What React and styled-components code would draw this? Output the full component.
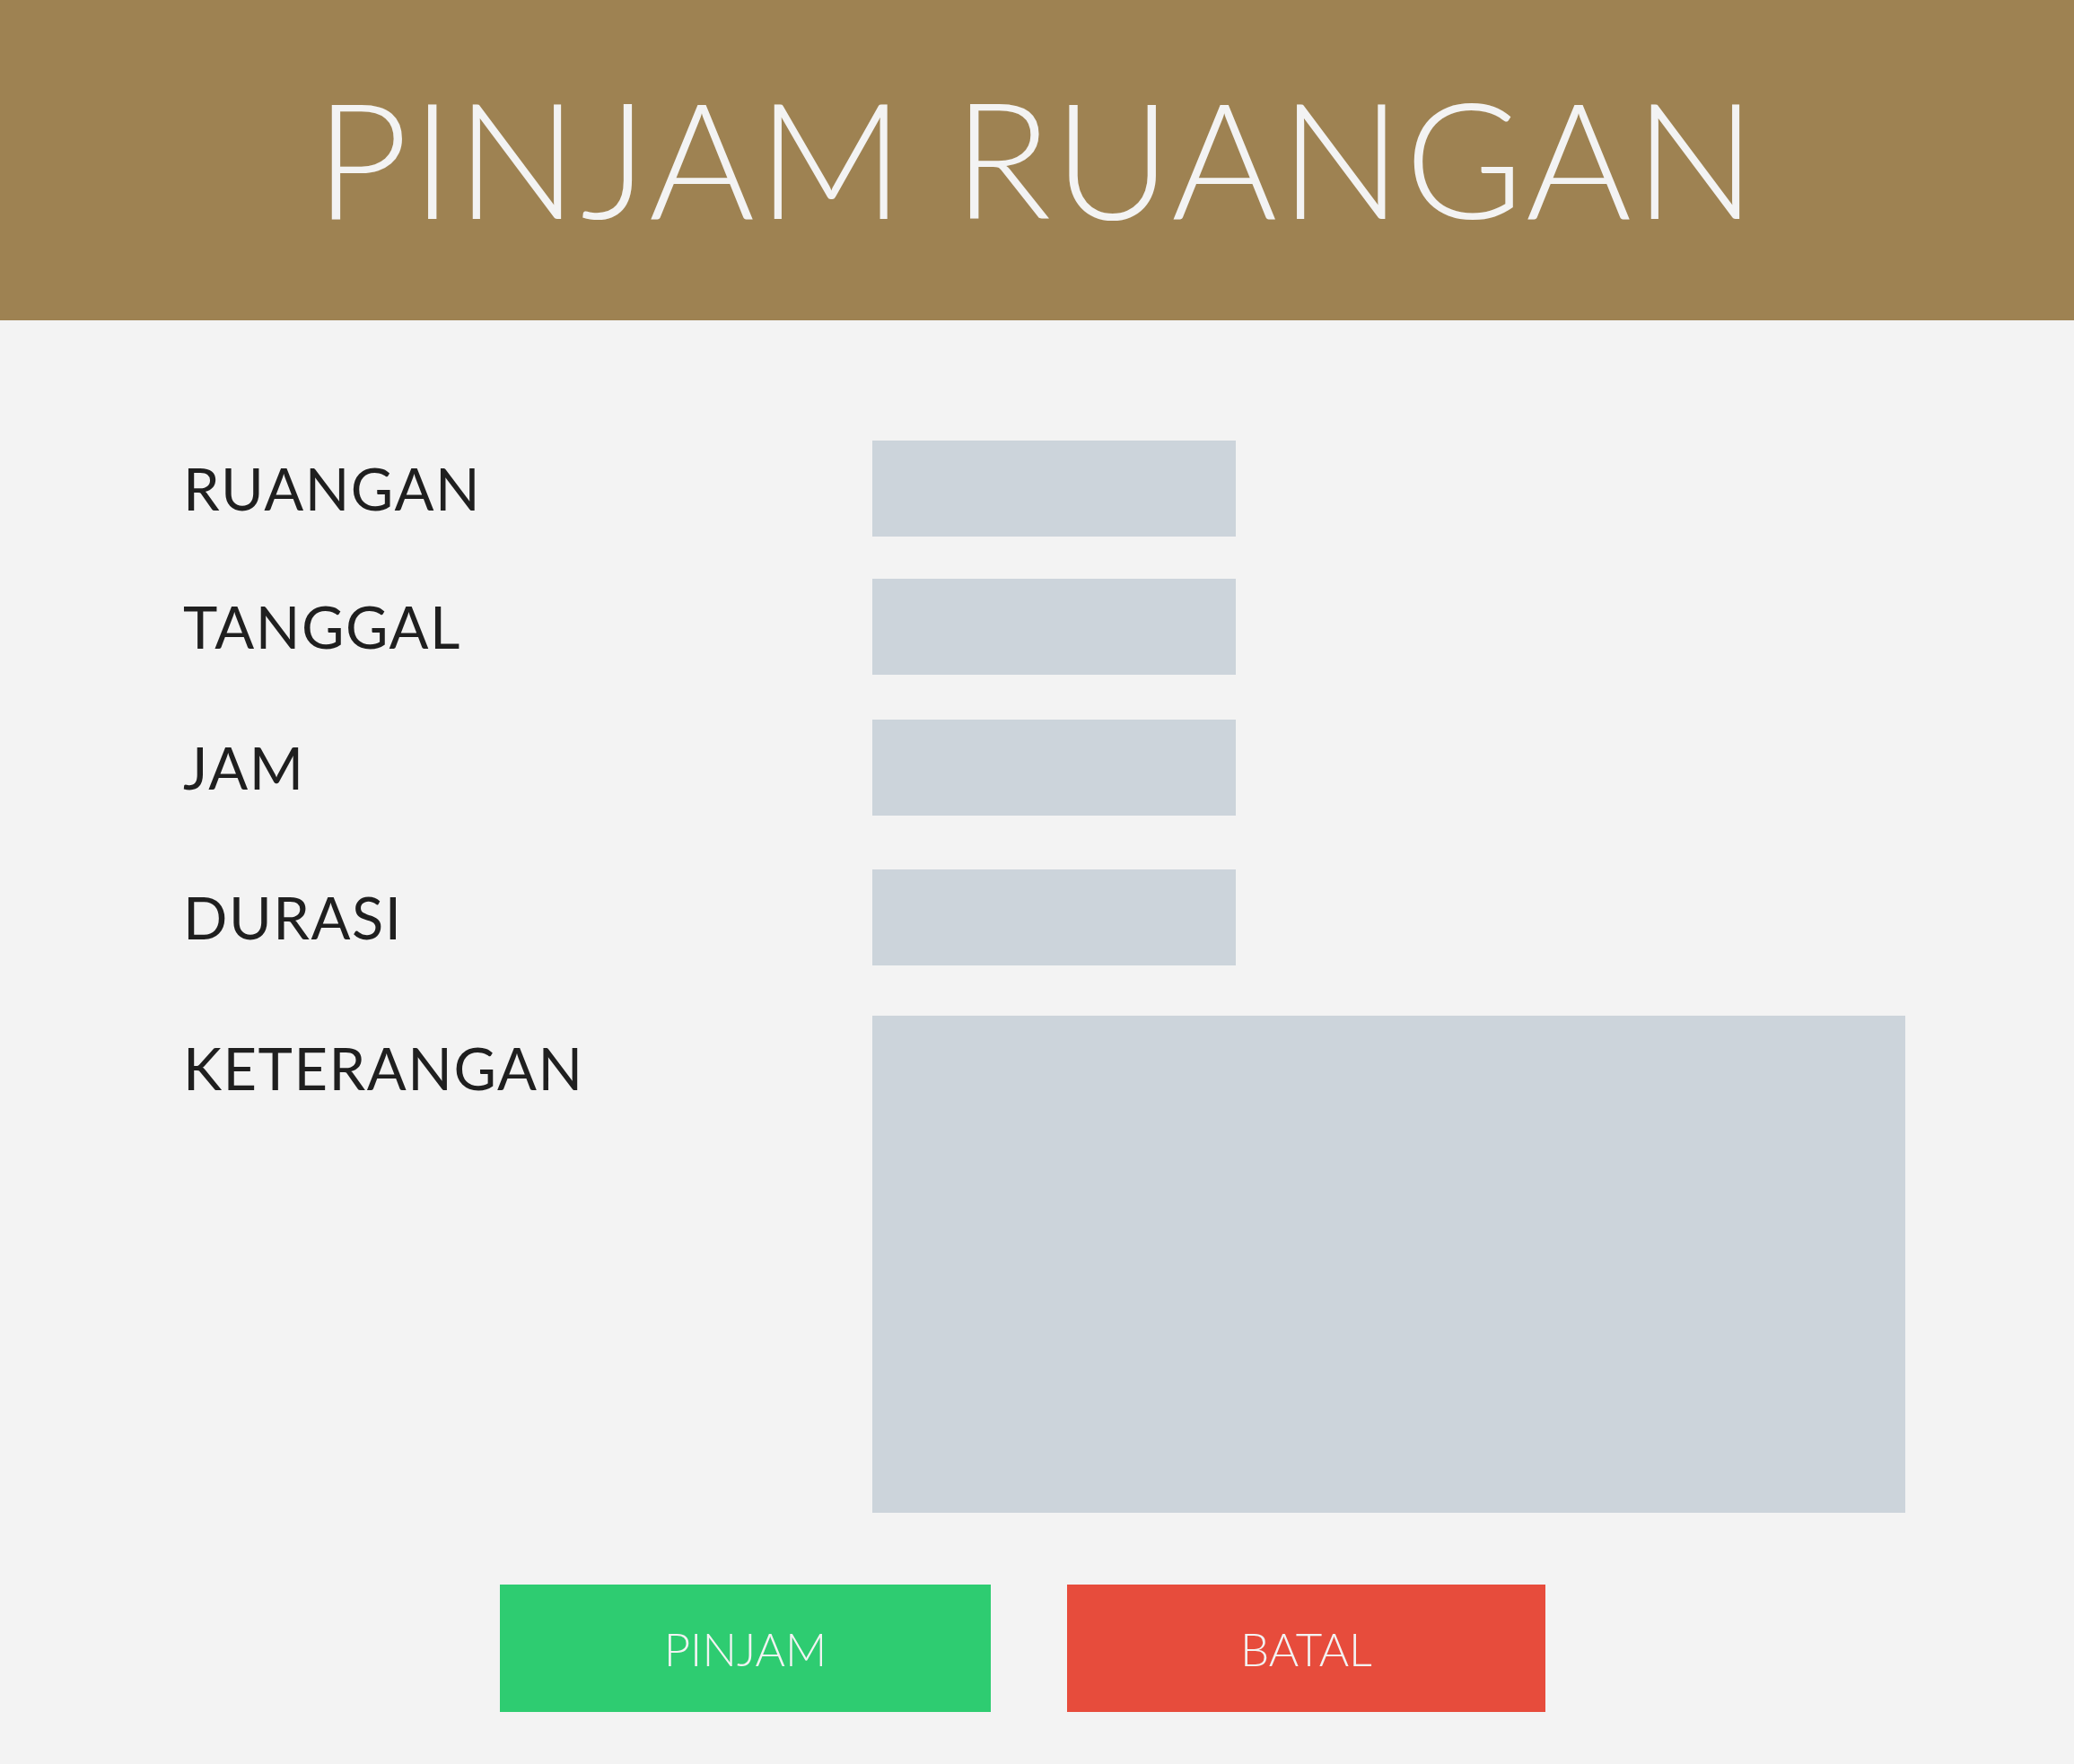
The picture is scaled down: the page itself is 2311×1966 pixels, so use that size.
import styled, { createGlobalStyle } from 'styled-components';

const GlobalStyle = createGlobalStyle`
    * {
        box-sizing: border-box;
    }
    body {
        margin: 0;
        background-color: #f3f3f3;
        font-family: 'Lato', 'Liberation Sans', sans-serif;
    }
`;

const fields = [
  { label: 'RUANGAN', space: 134 },
  { label: 'TANGGAL', space: 47 },
  { label: 'JAM', space: 50 },
  { label: 'DURASI', space: 60 },
];

const Page = styled.div`
    width: 2311px;
    height: 1966px;
    background-color: #f3f3f3;
    display: flex;
    flex-direction: column;
`;

const Header = styled.header`
    height: 357px;
    padding-bottom: 10px;
    background-color: #9e8252;
    display: flex;
    align-items: center;
    justify-content: center;
`;

const Title = styled.h1`
    margin: 0;
    color: #f3f3f3;
    font-family: 'Lato', 'Liberation Sans', sans-serif;
    font-weight: 300;
    font-size: 180px;
    line-height: 1;
    letter-spacing: 3px;
`;

const Form = styled.form`
    display: flex;
    flex-direction: column;
    padding-left: 204px;
`;

const Row = styled.div`
    display: grid;
    grid-template-columns: 768px auto;
    align-items: ${p => (p.$top ? 'start' : 'center')};
    margin-top: ${p => p.$space}px;
`;

const Label = styled.label`
    color: #1f1f1f;
    font-size: 65px;
    font-weight: 400;
    line-height: 1;
    letter-spacing: 1.5px;
    padding-top: ${p => (p.$top ? '26px' : '0')};
`;

const Field = styled.div`
    width: ${p => (p.$wide ? '1151px' : '405px')};
    height: ${p => (p.$wide ? '554px' : '107px')};
    background-color: #ccd4db;
`;

const Actions = styled.div`
    display: flex;
    gap: 85px;
    margin-top: 80px;
    padding-left: 557px;
`;

const Button = styled.button`
    width: ${p => p.$width}px;
    height: 142px;
    border: none;
    background-color: ${p => p.$color};
    color: #f3f3f3;
    font-family: 'Lato', 'Liberation Sans', sans-serif;
    font-size: 51px;
    font-weight: 300;
    cursor: pointer;
`;

function App() {
  return (
    <>
      <GlobalStyle />
      <Page>
        <Header>
          <Title>PINJAM RUANGAN</Title>
        </Header>

        <Form>
          {fields.map(field => (
            <Row $space={field.space} key={field.label}>
              <Label>{field.label}</Label>
              <Field />
            </Row>
          ))}
          <Row $space={56} $top>
            <Label $top>KETERANGAN</Label>
            <Field $wide />
          </Row>
        </Form>

        <Actions>
          <Button type="button" $width={547} $color="#2ecc71">PINJAM</Button>
          <Button type="button" $width={533} $color="#e74c3c">BATAL</Button>
        </Actions>
      </Page>
    </>
  );
}

export default App;
